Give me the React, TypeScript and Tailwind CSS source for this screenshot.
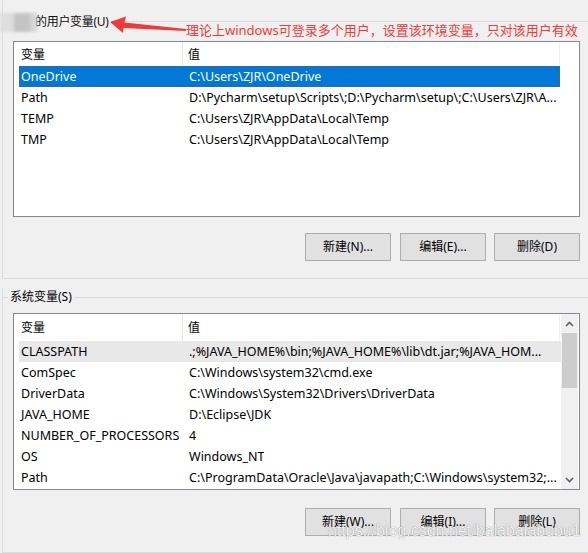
import React from "react";

type Row = { name: string; value: string };

const userVars: Row[] = [
  { name: "OneDrive", value: "C:\\Users\\ZJR\\OneDrive" },
  { name: "Path", value: "D:\\Pycharm\\setup\\Scripts\\;D:\\Pycharm\\setup\\;C:\\Users\\ZJR\\A..." },
  { name: "TEMP", value: "C:\\Users\\ZJR\\AppData\\Local\\Temp" },
  { name: "TMP", value: "C:\\Users\\ZJR\\AppData\\Local\\Temp" },
];

const sysVars: Row[] = [
  { name: "CLASSPATH", value: ".;%JAVA_HOME%\\bin;%JAVA_HOME%\\lib\\dt.jar;%JAVA_HOM..." },
  { name: "ComSpec", value: "C:\\Windows\\system32\\cmd.exe" },
  { name: "DriverData", value: "C:\\Windows\\System32\\Drivers\\DriverData" },
  { name: "JAVA_HOME", value: "D:\\Eclipse\\JDK" },
  { name: "NUMBER_OF_PROCESSORS", value: "4" },
  { name: "OS", value: "Windows_NT" },
  { name: "Path", value: "C:\\ProgramData\\Oracle\\Java\\javapath;C:\\Windows\\system32;..." },
];

function VarRow({ row, state }: { row: Row; state?: "selected" | "hover" }) {
  const bg =
    state === "selected"
      ? "bg-[#0078d7] text-white outline-1 outline-dotted outline-[#7a5a2a] -outline-offset-1"
      : state === "hover"
        ? "bg-[#e8e8e8] text-black"
        : "text-black";
  return (
    <div className={`ml-[5px] flex h-[21px] items-center whitespace-nowrap pt-[2px] text-[12.5px] ${bg}`}>
      <div className="w-[170px] shrink-0 pl-[2px]">{row.name}</div>
      <div className="overflow-hidden">{row.value}</div>
    </div>
  );
}

function Header({ h }: { h: string }) {
  return (
    <div className={`flex ${h} w-[546px] items-center`}>
      <div className="flex h-full w-[169px] shrink-0 items-center border-r border-[#e5e5e5] pl-[7px] pt-px">变量</div>
      <div className="flex h-full flex-1 items-center border-r border-[#f0f0f0] pl-[5px] pt-px">值</div>
    </div>
  );
}

function Buttons({ labels }: { labels: string[] }) {
  return (
    <div className="flex h-[28px] justify-end gap-[8px] pr-[8px]">
      {labels.map((l, i) => (
        <button
          key={l}
          className={`flex h-[28px] w-[86px] items-center justify-center border border-[#adadad] bg-[#e1e1e1] text-black ${i === 0 ? "mr-px" : ""}`}
        >
          {l}
        </button>
      ))}
    </div>
  );
}

function ScrollBar() {
  return (
    <div className="flex w-[17px] flex-col bg-[#f0f0f0]">
      <div className="flex h-[19px] items-center justify-center">
        <svg width="9" height="6" viewBox="0 0 9 6">
          <path d="M1 5 L4.5 1.5 L8 5" fill="none" stroke="#606060" strokeWidth="1.6" />
        </svg>
      </div>
      <div className="mx-[1px] h-[55px] bg-[#cdcdcd]" />
      <div className="flex-1" />
      <div className="flex h-[19px] items-center justify-center">
        <svg width="9" height="6" viewBox="0 0 9 6">
          <path d="M1 1 L4.5 4.5 L8 1" fill="none" stroke="#606060" strokeWidth="1.6" />
        </svg>
      </div>
    </div>
  );
}

export default function App() {
  return (
    <div className="relative h-[553px] w-[588px] overflow-hidden bg-[#f0f0f0] font-['Noto_Sans','Noto_Sans_CJK_SC',sans-serif] text-[12px] text-black">
      {/* 用户变量 */}
      <div className="ml-[2px] h-[279px] border-b border-l border-[#dcdcdc] pt-[13px]">
        <div className="flex h-[18px] items-center">
          <div className="-ml-[3px] flex h-[19px] w-[37px] shrink-0 blur-[1.5px]">
            <div className="w-[14px] bg-[#dedede]" />
            <div className="w-[16px] bg-[#c4c4c4]" />
            <div className="w-[7px] bg-[#d6d6d6]" />
          </div>
          <span className="-ml-[2px] whitespace-nowrap pr-[2px] tracking-[-0.3px] text-[#111]">的用户变量(U)</span>
          <div className="h-px flex-1 -translate-y-[1px] bg-[#dcdcdc]" />
        </div>

        <div className="ml-[10px] mt-[10px] flex h-[176px] w-[567px] border border-[#828790] bg-white">
          <div className="w-[546px]">
            <Header h="h-[24px]" />
            {userVars.map((r, i) => (
              <VarRow key={r.name} row={r} state={i === 0 ? "selected" : undefined} />
            ))}
          </div>
        </div>

        <div className="mt-[16px]">
          <Buttons labels={["新建(N)...", "编辑(E)...", "删除(D)"]} />
        </div>
      </div>

      {/* 系统变量 */}
      <div className="ml-[2px] mt-[9px] h-[265px] border-b border-l border-[#dcdcdc]">
        <div className="flex h-[18px] items-center">
          <div className="h-px w-[5px] bg-[#dcdcdc]" />
          <span className="whitespace-nowrap px-[2px]">系统变量(S)</span>
          <div className="h-px flex-1 bg-[#dcdcdc]" />
        </div>

        <div className="ml-[10px] mt-[7px] flex h-[177px] w-[567px] border border-[#828790] bg-white">
          <div className="w-[547px]">
            <Header h="h-[27px]" />
            {sysVars.map((r, i) => (
              <VarRow key={r.name} row={r} state={i === 0 ? "hover" : undefined} />
            ))}
          </div>
          <ScrollBar />
        </div>

        <div className="mt-[18px]">
          <Buttons labels={["新建(W)...", "编辑(I)...", "删除(L)"]} />
        </div>
      </div>

      {/* 标注 */}
      <svg className="absolute left-[106px] top-[12px]" width="84" height="24" viewBox="106 12 84 24">
        <polygon
          points="110,22 126,16.5 124.5,22.5 186,29 186,31 123.5,28 123,33"
          fill="#f03a3a"
        />
      </svg>
      <div className="absolute left-[186px] top-[21px] whitespace-nowrap text-[13px] leading-[18px] text-[#f03a3a]">
        理论上windows可登录多个用户，设置该环境变量，只对该用户有效
      </div>

      {/* 水印 */}
      <div className="absolute left-[328px] top-[523px] whitespace-nowrap font-['Liberation_Sans',sans-serif] text-[16px] leading-none text-white/90 [text-shadow:0_0_1px_rgba(60,60,60,0.7)]">
        https://blog.csdn.net/balabalabubu1
      </div>
    </div>
  );
}
